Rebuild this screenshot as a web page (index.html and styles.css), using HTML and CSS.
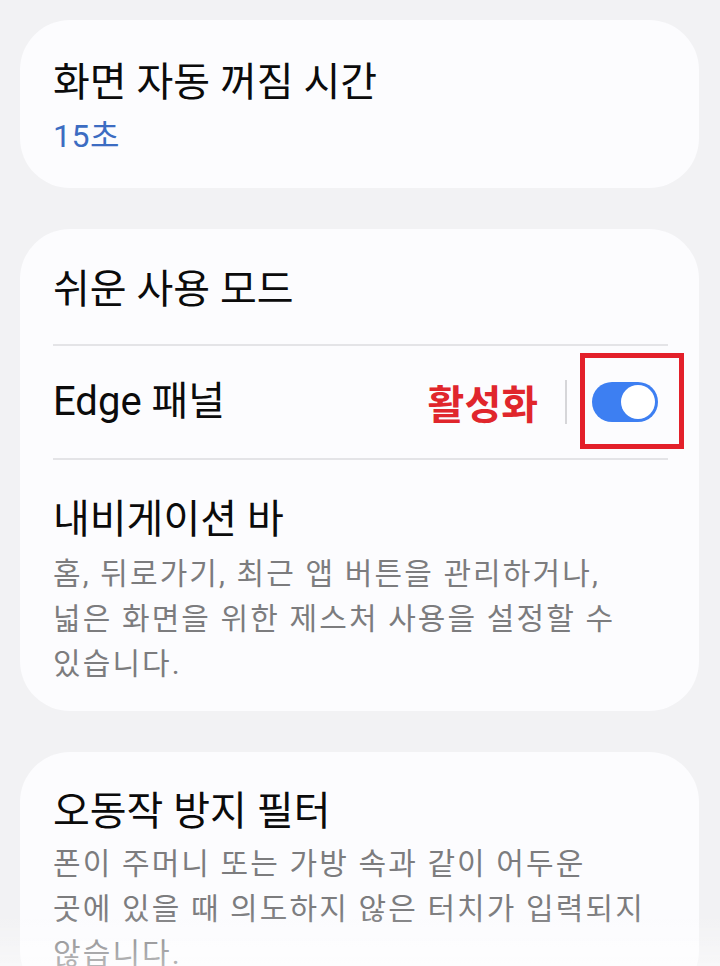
FILE: index.html
```html
<!DOCTYPE html>
<html lang="ko">
<head>
  <meta charset="UTF-8" />
  <title>유용한 기능</title>
  <link rel="stylesheet" href="styles.css">
</head>
<body>
  <div class="list">
    <!-- Screen timeout -->
    <section class="card">
      <div class="item item-first">
        <div class="title">화면 자동 꺼짐 시간</div>
        <div class="value">15초</div>
      </div>
    </section>

    <!-- Easy mode / Edge panels / Navigation bar -->
    <section class="card">
      <div class="item item-single">
        <div class="title">쉬운 사용 모드</div>
      </div>
      <div class="item item-switch">
        <div class="title label">Edge 패널</div>
        <span class="state">활성화</span>
        <span class="vline"></span>
        <span class="switch-wrap">
          <span class="switch on"><span class="knob"></span></span>
          <span class="mark"></span>
        </span>
      </div>
      <div class="item item-desc">
        <div class="title">내비게이션 바</div>
        <p class="desc">홈, 뒤로가기, 최근 앱 버튼을 관리하거나,<br>넓은 화면을 위한 제스처 사용을 설정할 수<br>있습니다.</p>
      </div>
    </section>

    <!-- Accidental touch protection -->
    <section class="card">
      <div class="item item-desc">
        <div class="title">오동작 방지 필터</div>
        <p class="desc">폰이 주머니 또는 가방 속과 같이 어두운<br>곳에 있을 때 의도하지 않은 터치가 입력되지<br>않습니다.</p>
      </div>
    </section>
  </div>
  <div class="fade"></div>
</body>
</html>
```

FILE: styles.css
```css
/* Base */
* {
  box-sizing: border-box;
}

html, body {
  height: 100%;
  overflow: hidden;
}

body {
  margin: 0;
  background: #f2f2f4;
  font-family: 'Roboto', 'Noto Sans CJK KR', sans-serif;
  color: #0b0b0b;
}

/* List of cards */
.list {
  display: flex;
  flex-direction: column;
  gap: 41px;
  padding: 20px 21px 0 20px;
}

.card {
  background: #fcfcfe;
  border-radius: 50px;
  padding: 0 31px 0 33px;
}

.item + .item {
  border-top: 2px solid #e4e4e7;
}

.title {
  font-size: 40px;
  line-height: 46px;
  letter-spacing: 0;
  font-weight: 400;
}

.item-first {
  padding: 40px 0 32px;
}

.value {
  margin-top: 10px;
  font-size: 32px;
  line-height: 40px;
  letter-spacing: 0.5px;
  color: #3c6cc2;
}

.item-single {
  padding: 38px 0 31px;
}

/* Row with switch */
.item-switch {
  display: flex;
  align-items: center;
  height: 114px;
}

.label {
  flex: 1;
}

.state {
  font-size: 40px;
  font-weight: 700;
  color: #e0262c;
}

.vline {
  width: 2px;
  height: 44px;
  margin: 0 25px 0 27px;
  background: #d6d6d9;
}

.switch-wrap {
  position: relative;
  margin-right: 10px;
  display: flex;
}

.switch {
  width: 66px;
  height: 40px;
  border-radius: 20px;
  background: #3d7ff2;
  display: flex;
  align-items: center;
  justify-content: flex-end;
  padding: 0 3px;
}

.knob {
  width: 34px;
  height: 34px;
  border-radius: 50%;
  background: #ffffff;
}

/* annotation box drawn over the switch */
.mark {
  position: absolute;
  left: -12px;
  top: -29px;
  width: 104px;
  height: 96px;
  border: 5px solid #e3202a;
}

/* Item with description */
.item-desc {
  padding: 37px 0 25px;
}

.desc {
  margin: 8px 0 0;
  font-size: 30px;
  line-height: 45px;
  letter-spacing: 2.1px;
  color: #7c7c7e;
}

.card:last-child .item-desc {
  padding-top: 37px;
}

.card:last-child .desc {
  margin-top: 6px;
}

/* soft fade at the bottom edge */
.fade {
  position: fixed;
  left: 0;
  right: 0;
  bottom: 0;
  height: 56px;
  background: linear-gradient(rgba(255, 255, 255, 0), rgba(255, 255, 255, 0.45));
  pointer-events: none;
}
```
